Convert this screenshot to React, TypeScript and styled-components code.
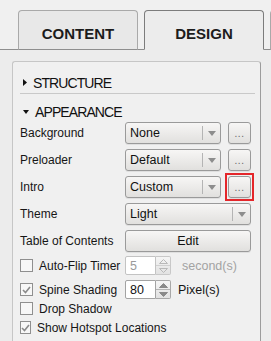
import React from "react";
import styled, { createGlobalStyle, css } from "styled-components";

const Global = createGlobalStyle`
  html, body { margin: 0; padding: 0; background: #ececec; }
  body {
    font-family: "Liberation Sans", Arial, sans-serif;
    font-size: 12px;
    color: #161616;
  }
`;

const Page = styled.div`
  width: 271px;
  height: 341px;
  overflow: hidden;
  background: #ececec;
`;

const TabBar = styled.div`
  display: flex;
  gap: 6px;
  height: 50px;
  box-sizing: border-box;
  padding: 10px 0 0 18px;
  border-bottom: 1px solid #8e8e8e;
  background: #f0f0f0;
`;

const Tab = styled.div<{ $active?: boolean }>`
  flex: 0 0 120px;
  height: 40px;
  box-sizing: border-box;
  margin-bottom: -1px;
  padding-top: 14px;
  border: 1px solid #a9a9a9;
  border-bottom-color: #8e8e8e;
  border-radius: 4px 4px 0 0;
  background: #e8e8e8;
  font-weight: bold;
  font-size: 15px;
  line-height: 17px;
  text-align: center;
  color: #1c1c1c;
  ${(p) =>
    p.$active &&
    css`
      border-color: #7c7c7c;
      border-bottom-color: #ececec;
      background: #ececec;
    `}
`;

const Content = styled.div`
  padding: 11px 10px 0 12px;
`;

const Panel = styled.div`
  box-sizing: border-box;
  min-height: 300px;
  padding: 10px 9px 0 7px;
  border: 1px solid #c6c6c6;
  border-right-color: #9c9c9c;
  border-radius: 3px;
  background: #f0f0f0;
  display: flex;
  flex-direction: column;
`;

const SectionHeader = styled.div<{ $line?: boolean; $mt?: number }>`
  display: flex;
  align-items: center;
  gap: 6px;
  height: 21px;
  margin-top: ${(p) => p.$mt ?? 0}px;
  padding-left: 3px;
  font-size: 14px;
  letter-spacing: -0.9px;
  color: #111;
  ${(p) =>
    p.$line &&
    css`
      border-bottom: 1px solid #c9c9c9;
      margin-right: -4px;
    `}
`;

const Arrow = styled.svg`
  flex: 0 0 auto;
`;

const Row = styled.div<{ $mt?: number; $h?: number }>`
  display: grid;
  grid-template-columns: 105px 1fr;
  align-items: center;
  height: ${(p) => p.$h ?? 22}px;
  margin-top: ${(p) => p.$mt ?? 0}px;
  white-space: nowrap;
`;

const Label = styled.span`
  color: #161616;
`;

const Controls = styled.div`
  display: flex;
  align-items: center;
  gap: 7px;
  height: 100%;
`;

const bevel = css`
  box-sizing: border-box;
  border: 1px solid #9a9a9a;
  border-radius: 3px;
  background: linear-gradient(#f7f6f5, #e1e0de);
  box-shadow: 0 1px 0 rgba(0, 0, 0, 0.07);
`;

const Select = styled.div<{ $w?: number }>`
  ${bevel};
  display: flex;
  align-items: center;
  height: 22px;
  width: ${(p) => (p.$w ? `${p.$w}px` : "100%")};
  padding-left: 4px;
`;

const SelectText = styled.span`
  flex: 1;
  font-size: 12.5px;
  color: #111;
`;

const SelectArrow = styled.div`
  flex: 0 0 17px;
  height: 14px;
  border-left: 1px solid #b4b4b4;
  display: flex;
  align-items: center;
  justify-content: center;
`;

const DotButton = styled.div<{ $ring?: boolean }>`
  ${bevel};
  position: relative;
  flex: 0 0 23px;
  height: 22px;
  display: flex;
  align-items: flex-end;
  justify-content: center;
  padding-bottom: 4px;
  font-size: 10px;
  line-height: 10px;
  color: #666;
  letter-spacing: 0.5px;
  ${(p) =>
    p.$ring &&
    css`
      &::after {
        content: "";
        position: absolute;
        inset: -4px;
        border: 2px solid #e4262a;
      }
    `}
`;

const WideButton = styled.div`
  ${bevel};
  height: 22px;
  display: flex;
  align-items: center;
  justify-content: center;
  font-size: 12.5px;
  color: #111;
`;

const Check = styled.span`
  display: flex;
  align-items: center;
  gap: 6px;
`;

const Box = styled.span`
  box-sizing: border-box;
  width: 13px;
  height: 13px;
  border: 1px solid #8f8f8f;
  background: #f7f7f7;
  display: flex;
  align-items: center;
  justify-content: center;
`;

const Spinner = styled.div<{ $disabled?: boolean }>`
  display: flex;
  height: 19px;
  width: 46px;
  font-size: 12.5px;
  color: ${(p) => (p.$disabled ? "#9a9a9a" : "#111")};
`;

const SpinInput = styled.div<{ $disabled?: boolean }>`
  box-sizing: border-box;
  width: 31px;
  height: 100%;
  border: 1px solid ${(p) => (p.$disabled ? "#c3c3c3" : "#a3a3a3")};
  border-radius: 2px 0 0 2px;
  background: #fff;
  padding-left: 4px;
  display: flex;
  align-items: center;
`;

const SpinButtons = styled.div<{ $disabled?: boolean }>`
  box-sizing: border-box;
  width: 15px;
  height: 100%;
  border: 1px solid ${(p) => (p.$disabled ? "#c8c8c8" : "#a8a8a8")};
  border-left: none;
  border-radius: 0 2px 2px 0;
  background: linear-gradient(#f5f5f5, #e2e2e2);
  display: flex;
  flex-direction: column;
`;

const SpinHalf = styled.div<{ $top?: boolean; $disabled?: boolean }>`
  flex: 1;
  display: flex;
  align-items: center;
  justify-content: center;
  ${(p) =>
    p.$top &&
    css`
      border-bottom: 1px solid ${p.$disabled ? "#d0d0d0" : "#b4b4b4"};
    `}
`;

const Unit = styled.span<{ $ml: number; $muted?: boolean }>`
  margin-left: ${(p) => p.$ml}px;
  font-size: 12.5px;
  color: ${(p) => (p.$muted ? "#a3a3a3" : "#161616")};
`;

const SpinField = styled.div`
  display: flex;
  align-items: center;
`;

const Tri = ({ up, disabled }: { up?: boolean; disabled?: boolean }) => (
  <svg width="9" height="5" viewBox="0 0 9 5">
    <polygon
      points={up ? "0.5,4.5 8.5,4.5 4.5,0.5" : "0.5,0.5 8.5,0.5 4.5,4.5"}
      fill={disabled ? "none" : "#8a8a8a"}
      stroke={disabled ? "#b8b8b8" : "#8a8a8a"}
      strokeWidth="1"
    />
  </svg>
);

const Dropdown = ({ value, w }: { value: string; w?: number }) => (
  <Select $w={w}>
    <SelectText>{value}</SelectText>
    <SelectArrow>
      <svg width="8" height="5" viewBox="0 0 8 5">
        <polygon points="0,0 8,0 4,5" fill="#8d8d8d" />
      </svg>
    </SelectArrow>
  </Select>
);

const CheckBox = ({ checked }: { checked?: boolean }) => (
  <Box>
    {checked && (
      <svg width="9" height="8" viewBox="0 0 9 8">
        <polyline points="1,4 3.5,6.5 8,1" fill="none" stroke="#8a8a8a" strokeWidth="1.6" />
      </svg>
    )}
  </Box>
);

const SpinBox = ({ value, disabled }: { value: string; disabled?: boolean }) => (
  <Spinner $disabled={disabled}>
    <SpinInput $disabled={disabled}>{value}</SpinInput>
    <SpinButtons $disabled={disabled}>
      <SpinHalf $top $disabled={disabled}>
        <Tri up disabled={disabled} />
      </SpinHalf>
      <SpinHalf>
        <Tri disabled={disabled} />
      </SpinHalf>
    </SpinButtons>
  </Spinner>
);

export default function App() {
  return (
    <Page>
      <Global />
      <TabBar>
        <Tab>CONTENT</Tab>
        <Tab $active>DESIGN</Tab>
        <Tab />
      </TabBar>
      <Content>
        <Panel>
          <SectionHeader $line>
            <Arrow width="4" height="7" viewBox="0 0 4 7">
              <polygon points="0,0 4,3.5 0,7" fill="#111" />
            </Arrow>
            STRUCTURE
          </SectionHeader>
          <SectionHeader $mt={7}>
            <Arrow width="6" height="4" viewBox="0 0 6 4">
              <polygon points="0,0 6,0 3,4" fill="#111" />
            </Arrow>
            APPEARANCE
          </SectionHeader>

          <Row>
            <Label>Background</Label>
            <Controls>
              <Dropdown value="None" w={96} />
              <DotButton>...</DotButton>
            </Controls>
          </Row>
          <Row $mt={5}>
            <Label>Preloader</Label>
            <Controls>
              <Dropdown value="Default" w={96} />
              <DotButton>...</DotButton>
            </Controls>
          </Row>
          <Row $mt={5}>
            <Label>Intro</Label>
            <Controls>
              <Dropdown value="Custom" w={96} />
              <DotButton $ring>...</DotButton>
            </Controls>
          </Row>
          <Row $mt={5}>
            <Label>Theme</Label>
            <Dropdown value="Light" />
          </Row>
          <Row $mt={5}>
            <Label>Table of Contents</Label>
            <WideButton>Edit</WideButton>
          </Row>

          <Row $mt={4} $h={19}>
            <Check>
              <CheckBox />
              Auto-Flip Timer
            </Check>
            <SpinField>
              <SpinBox value="5" disabled />
              <Unit $ml={11} $muted>
                second(s)
              </Unit>
            </SpinField>
          </Row>
          <Row $mt={5} $h={19}>
            <Check>
              <CheckBox checked />
              Spine Shading
            </Check>
            <SpinField>
              <SpinBox value="80" />
              <Unit $ml={7}>Pixel(s)</Unit>
            </SpinField>
          </Row>
          <Row $h={19}>
            <Check>
              <CheckBox />
              Drop Shadow
            </Check>
          </Row>
          <Row $h={19}>
            <Check>
              <CheckBox checked />
              Show Hotspot Locations
            </Check>
          </Row>
        </Panel>
      </Content>
    </Page>
  );
}
